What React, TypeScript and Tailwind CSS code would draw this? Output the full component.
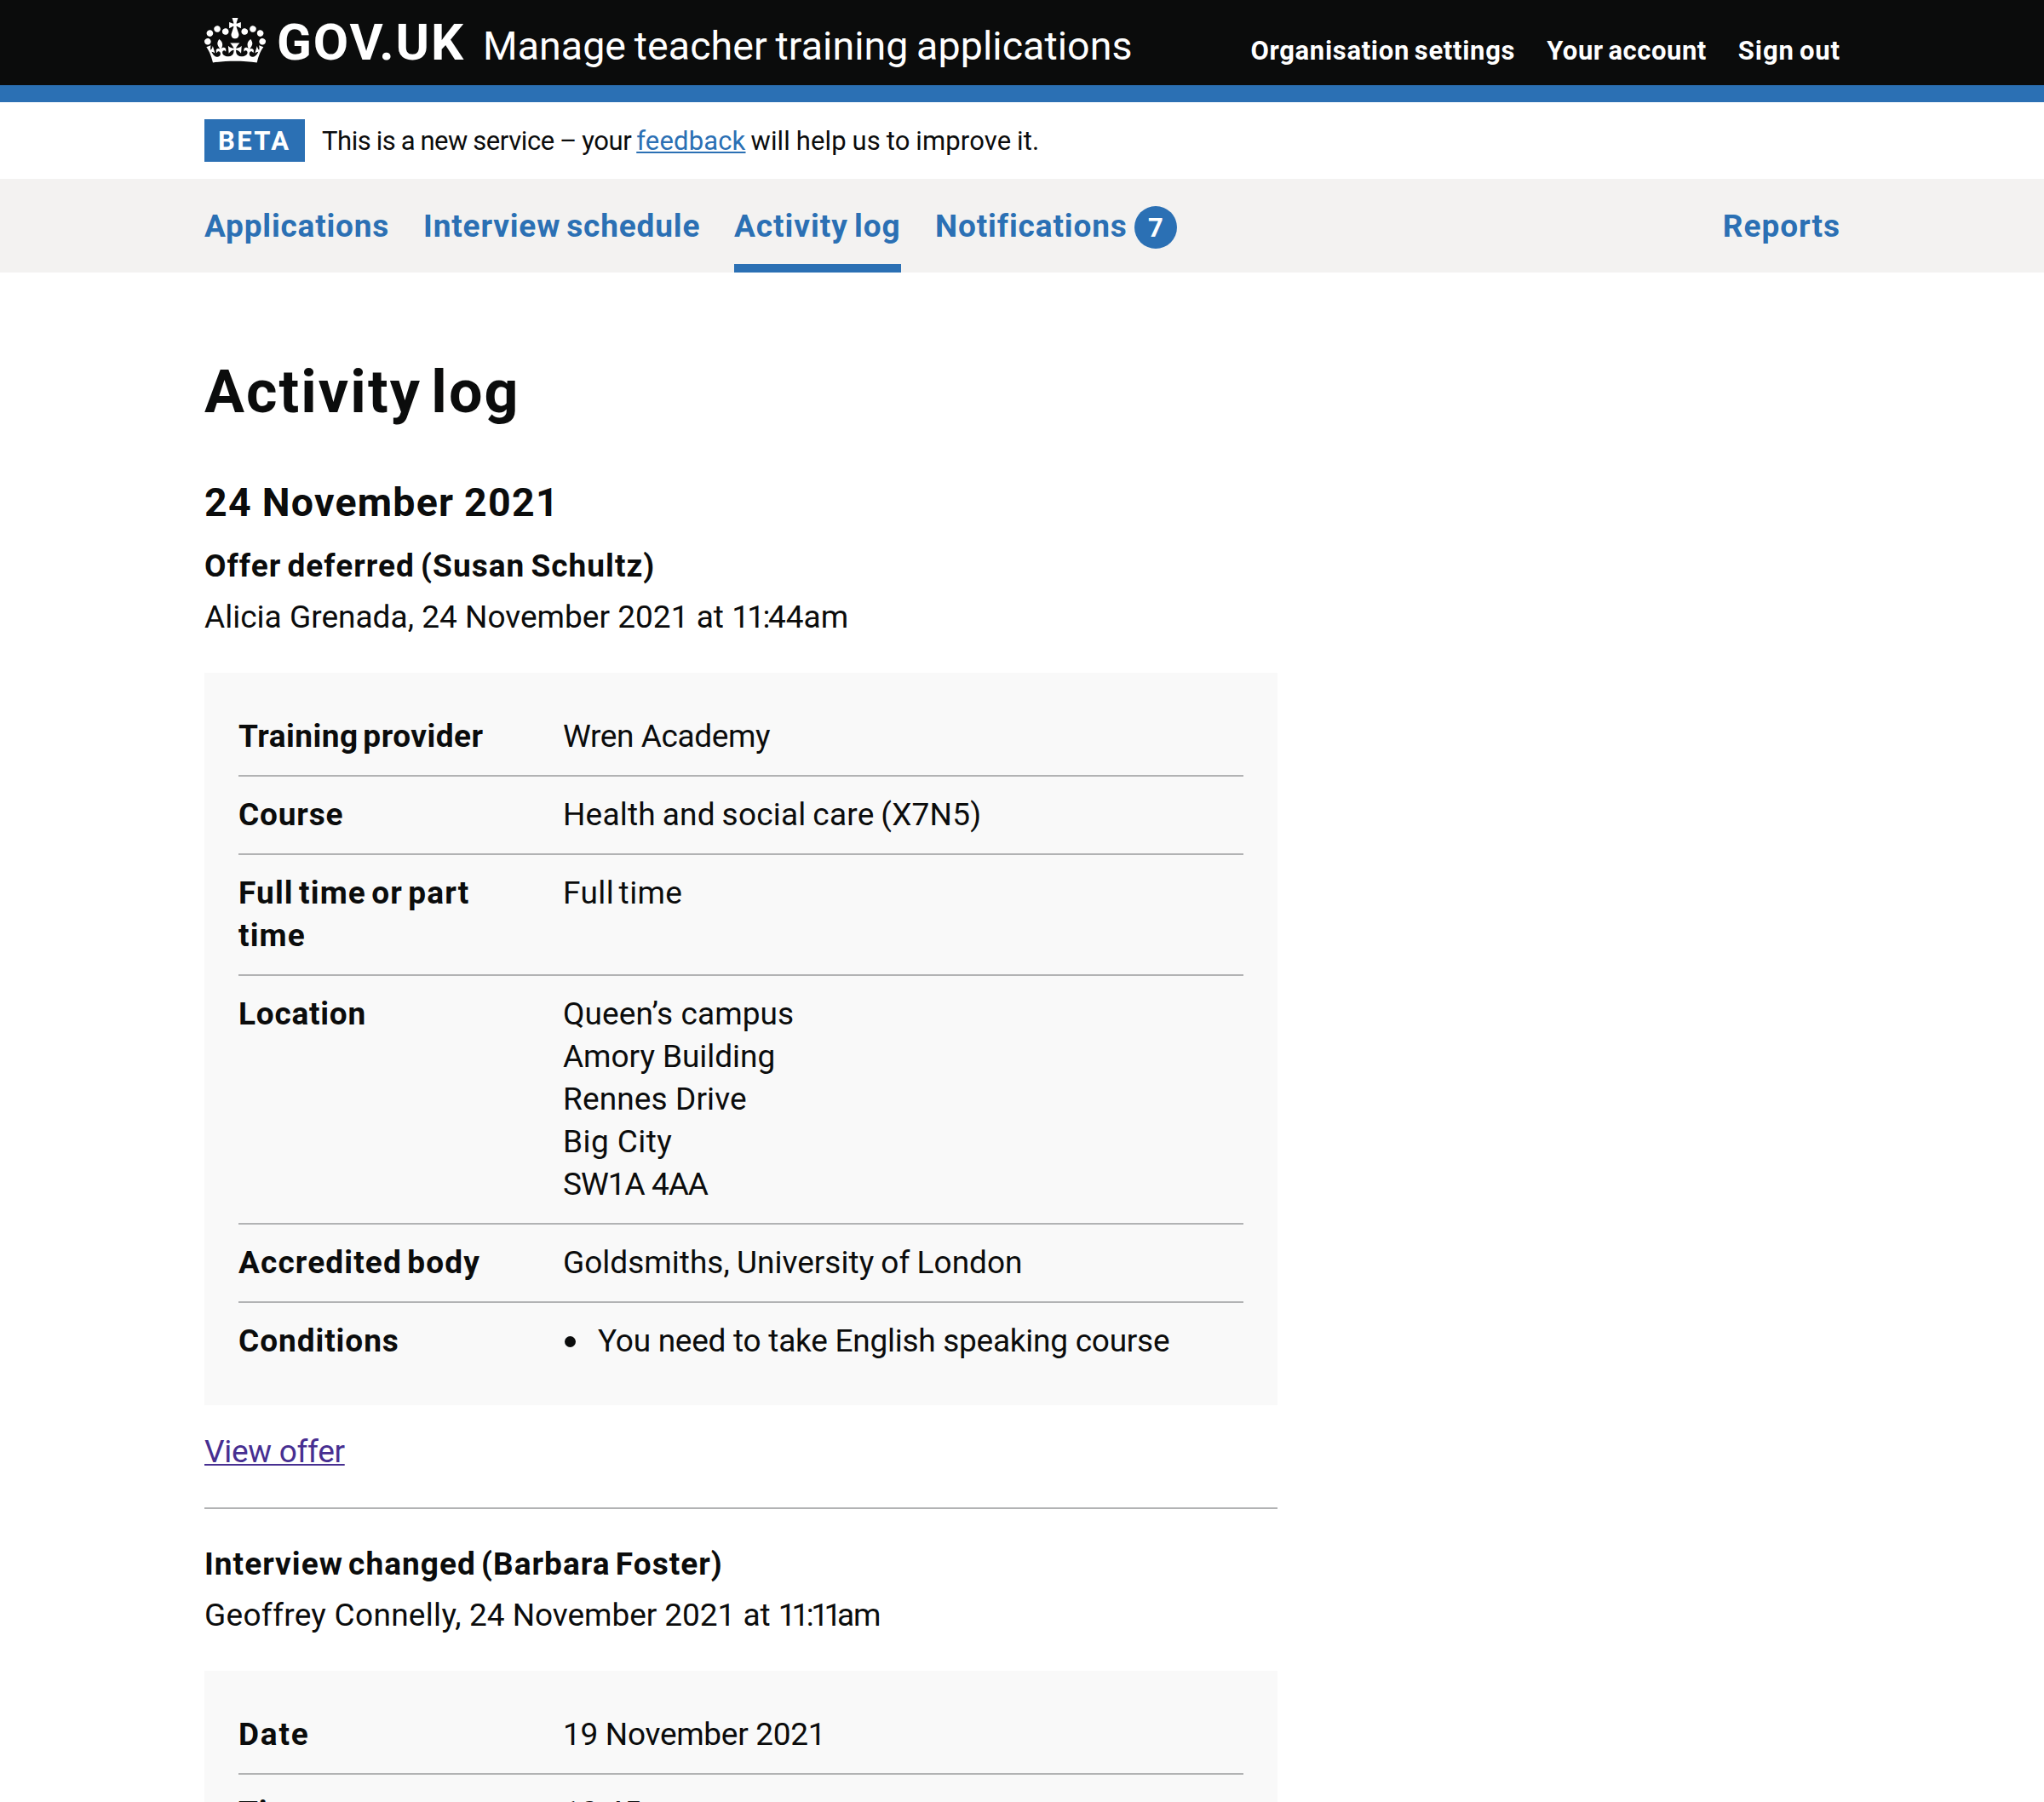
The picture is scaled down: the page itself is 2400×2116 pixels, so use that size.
import type { ReactNode } from "react";

function Crown() {
  return (
    <svg
      aria-hidden="true"
      className="mt-[21px] h-[53px] w-[72px] shrink-0 self-start"
      viewBox="0 0 132 97"
      fill="currentColor"
    >
      <path
        fillRule="evenodd"
        d="M25 30.2c3.5 1.5 7.7-.2 9.1-3.7 1.5-3.6-.2-7.8-3.9-9.2-3.6-1.4-7.6.3-9.1 3.9-1.4 3.5.3 7.5 3.9 9zM9 39.5c3.6 1.5 7.8-.2 9.2-3.7 1.5-3.6-.2-7.8-3.9-9.1-3.6-1.5-7.6.2-9.1 3.8-1.4 3.5.3 7.5 3.8 9zM4.4 57.2c3.5 1.5 7.7-.2 9.1-3.8 1.5-3.6-.2-7.7-3.9-9.1-3.5-1.5-7.6.3-9.1 3.8-1.4 3.5.3 7.6 3.9 9.1zm38.3-21.4c3.5 1.5 7.7-.2 9.1-3.8 1.5-3.6-.2-7.7-3.9-9.1-3.6-1.5-7.6.3-9.1 3.8-1.3 3.6.4 7.7 3.9 9.1zm64.4-5.6c-3.6 1.5-7.8-.2-9.1-3.7-1.5-3.6.2-7.8 3.8-9.2 3.6-1.4 7.7.3 9.2 3.9 1.3 3.5-.4 7.5-3.9 9zm15.9 9.3c-3.6 1.5-7.7-.2-9.1-3.7-1.5-3.6.2-7.8 3.7-9.1 3.6-1.5 7.7.2 9.2 3.8 1.5 3.5-.3 7.5-3.8 9zm4.7 17.7c-3.6 1.5-7.8-.2-9.2-3.8-1.5-3.6.2-7.7 3.9-9.1 3.6-1.5 7.7.3 9.2 3.8 1.3 3.5-.4 7.6-3.9 9.1zM89.3 35.8c-3.6 1.5-7.8-.2-9.2-3.8-1.4-3.6.2-7.7 3.9-9.1 3.6-1.5 7.7.3 9.2 3.8 1.4 3.6-.3 7.7-3.9 9.1zM69.7 17.7l8.9 4.7V9.3l-8.9 2.8c-.2-.3-.5-.6-.9-.9L72.4 0H59.6l3.5 11.2c-.3.3-.6.5-.9.9l-8.8-2.8v13.1l8.8-4.7c.3.3.6.7.9.9l-5 15.4v.1c-.2.8-.4 1.6-.4 2.4 0 4.1 3.1 7.5 7 8.1h.2c.3 0 .7.1 1 .1.4 0 .7 0 1-.1h.2c4-.6 7.1-4.1 7.1-8.1 0-.8-.1-1.7-.4-2.4V34l-5.1-15.4c.4-.2.7-.6 1-.9zM66 92.8c16.9 0 32.8 1.1 47.1 3.2 4-16.9 8.9-26.7 14-33.5l-9.6-3.4c1 4.9 1.1 7.2 0 10.2-1.5-1.4-3-4.3-4.2-8.7L108.6 76c2.8-2 5-3.2 7.5-3.3-4.4 9.4-10 11.9-13.6 11.2-4.3-.8-6.3-4.6-5.6-7.9 1-4.7 5.7-5.9 8-.5 4.3-8.7-3-11.4-7.6-8.8 7.1-7.2 7.9-13.5 2.1-21.1-8 6.1-8.1 12.3-4.5 20.8-4.7-5.4-12.1-2.5-9.5 6.2 3.4-5.2 7.9-2 7.2 3.1-.6 4.3-6.4 7.8-13.5 7.2-10.3-.9-10.9-8-11.2-13.8 2.5-.5 7.1 1.8 11 7.3L80.2 60c-4.1 4.4-8 5.3-12.3 5.4 1.4-4.4 8-11.6 8-11.6H55.5s6.4 7.2 7.9 11.6c-4.2-.1-8-1-12.3-5.4l1.4 16.4c3.9-5.5 8.5-7.7 10.9-7.3-.3 5.8-.9 12.8-11.1 13.8-7.2.6-12.9-2.9-13.5-7.2-.7-5 3.8-8.3 7.1-3.1 2.7-8.7-4.6-11.6-9.4-6.2 3.7-8.5 3.6-14.7-4.6-20.8-5.8 7.6-5 13.9 2.2 21.1-4.7-2.6-11.9.1-7.7 8.8 2.3-5.5 7.1-4.2 8.1.5.7 3.3-1.3 7.1-5.7 7.9-3.5.7-9-1.8-13.5-11.2 2.5.1 4.7 1.3 7.5 3.3l-4.7-15.4c-1.2 4.4-2.7 7.2-4.3 8.7-1.1-3-.9-5.3 0-10.2l-9.5 3.4c5 6.9 9.9 16.7 14 33.5 14.8-2.1 30.8-3.2 47.7-3.2z"
      />
    </svg>
  );
}

function Header() {
  return (
    <header className="h-[120px] border-b-[20px] border-[#2b70b4] bg-[#0b0c0c] text-white">
      <div className="mx-auto flex w-[1920px]">
        <Crown />
        <div className="flex grow items-baseline pt-5 whitespace-nowrap">
          <a className="ml-[13px] w-[242px] text-[60px] leading-[60px] font-bold tracking-[1.9px]">GOV.UK</a>
          <a className="text-[46.5px] leading-[60px] tracking-[0.08px] [word-spacing:-2px]">
            Manage teacher training applications
          </a>
          <nav className="-mr-px ml-auto flex gap-[37px] text-[31px] leading-[40px] font-bold [word-spacing:-2.5px]">
            <a className="tracking-[0.68px]">Organisation settings</a>
            <a className="tracking-[0.54px]">Your account</a>
            <a className="tracking-[0.9px]">Sign out</a>
          </nav>
        </div>
      </div>
    </header>
  );
}

function PhaseBanner() {
  return (
    <div className="mx-auto flex h-[90px] w-[1920px] items-center text-[31px] leading-[50px] whitespace-nowrap">
      <strong className="h-[50px] w-[118px] bg-[#2b70b4] pl-4 leading-[51px] tracking-[2.4px] text-white">BETA</strong>
      <p className="mt-0.5 ml-5 flex">
        <span className="tracking-[-0.42px] [word-spacing:-1px]">This is a new service – your</span>
        <a className="mr-1.5 ml-[6px] tracking-[0.16px] text-[#2b70b4] underline decoration-2 underline-offset-[2px]">
          feedback
        </a>
        <span className="tracking-[0.13px] [word-spacing:-1px]">will help us to improve it.</span>
      </p>
    </div>
  );
}

function PrimaryNav() {
  return (
    <nav className="bg-[#f3f2f1] text-[37px] leading-[50px] font-bold text-[#2b70b4]">
      <div className="mx-auto flex h-[110px] w-[1920px] gap-10 whitespace-nowrap [word-spacing:-3px]">
        <a className="w-[217px] pt-[31px] tracking-[0.8px]">Applications</a>
        <a className="w-[325px] pt-[31px] tracking-[0.84px]">Interview schedule</a>
        <a className="w-[196px] border-b-10 border-[#2b70b4] pt-[31px] tracking-[0.96px]">Activity log</a>
        <a className="flex pt-[31px]">
          <span className="w-[234px] tracking-[0.87px]">Notifications</span>
          <span className="mt-px h-[50px] w-[50px] rounded-full bg-[#2b70b4] text-center text-[31px] leading-[51px] text-white">
            7
          </span>
        </a>
        <a className="-mr-px ml-auto pt-[31px] tracking-[0.98px]">Reports</a>
      </div>
    </nav>
  );
}

function Panel({ children }: { children: ReactNode }) {
  return <dl className="mt-10 bg-[#f9f9f9] px-10 py-[30px]">{children}</dl>;
}

function Row({ label, last, children }: { label: ReactNode; last?: boolean; children: ReactNode }) {
  return (
    <div className={last ? "flex py-5" : "flex border-b-2 border-[#b2b3b4] py-5"}>
      <dt className="w-[381px] shrink-0 pr-[90px] font-bold [word-spacing:-4px]">{label}</dt>
      <dd className="grow whitespace-nowrap">{children}</dd>
    </div>
  );
}

export default function App() {
  return (
    <div className="h-[2116px] w-[2400px] overflow-hidden bg-white font-[Roboto,Arial,sans-serif] text-[#0b0c0c]">
      <Header />
      <PhaseBanner />
      <PrimaryNav />
      <main className="mx-auto w-[1920px] pt-[100px] text-[37px] leading-[50px]">
        <div className="w-[1260px]">
          <h1 className="text-[70px] leading-[80px] font-bold tracking-[2.04px] [word-spacing:-8px]">Activity log</h1>
          <h2 className="mt-[60px] text-[46.5px] leading-[60px] font-bold tracking-[1.25px] [word-spacing:-1px]">
            24 November 2021
          </h2>

          <section className="mt-5">
            <h3 className="font-bold tracking-[1.03px] [word-spacing:-3px]">Offer deferred (Susan Schultz)</h3>
            <p className="mt-2.5 tracking-[0.02px]">
              Alicia Grenada, 24 November 2021 at <span className="tracking-[-2.6px]">11:</span>44am
            </p>
            <Panel>
              <Row label={<span className="tracking-[0.5px]">Training provider</span>}>
                <span className="tracking-[-0.4px]">Wren Academy</span>
              </Row>
              <Row label={<span className="tracking-[0.82px]">Course</span>}>
                <span className="tracking-[0.2px] [word-spacing:-1.5px]">Health and social care (X7N5)</span>
              </Row>
              <Row label={<span className="tracking-[1.13px]">Full time or part time</span>}>
                <span className="tracking-[0.4px] [word-spacing:-4px]">Full time</span>
              </Row>
              <Row label={<span className="tracking-[0.75px]">Location</span>}>
                <span className="tracking-[0.09px]">Queen’s campus</span>
                <br />
                <span className="tracking-[-0.04px]">Amory Building</span>
                <br />
                <span className="tracking-[0.12px]">Rennes Drive</span>
                <br />
                <span className="tracking-[0.45px]">Big City</span>
                <br />
                <span className="tracking-[-1px]">SW1A 4AA</span>
              </Row>
              <Row label={<span className="tracking-[1.14px]">Accredited body</span>}>
                <span className="tracking-[0.02px] [word-spacing:-1px]">Goldsmiths, University of London</span>
              </Row>
              <Row last label={<span className="tracking-[0.94px]">Conditions</span>}>
                <ul>
                  <li className="flex tracking-[-0.26px]">
                    <span className="mt-[19px] mr-[26px] ml-[2px] h-[13px] w-[13px] rounded-full bg-[#0b0c0c]" />
                    You need to take English speaking course
                  </li>
                </ul>
              </Row>
            </Panel>
            <p className="mt-[30px]">
              <a className="tracking-[-0.3px] text-[#472f91] underline decoration-2 underline-offset-[2px]">
                View offer
              </a>
            </p>
          </section>

          <section className="mt-10 border-t-2 border-[#b2b3b4] pt-10">
            <h3 className="font-bold tracking-[1.03px] [word-spacing:-4px]">Interview changed (Barbara Foster)</h3>
            <p className="mt-2.5 tracking-[-0.04px]">
              <span className="tracking-[0.3px]">Geoffrey Connelly,</span> 24 November 2021 at{" "}
              <span className="tracking-[-5px]">1</span>
              <span className="tracking-[-3.6px]">1:</span>
              <span className="tracking-[-5.4px]">11</span>
              <span className="tracking-[-1px]">am</span>
            </p>
            <Panel>
              <Row label={<span className="tracking-[1.8px]">Date</span>}>
                <span className="tracking-[-0.3px]">19 November 2021</span>
              </Row>
              <Row label={<span className="tracking-[0.89px]">Time</span>}>10:45am</Row>
            </Panel>
          </section>
        </div>
      </main>
    </div>
  );
}
